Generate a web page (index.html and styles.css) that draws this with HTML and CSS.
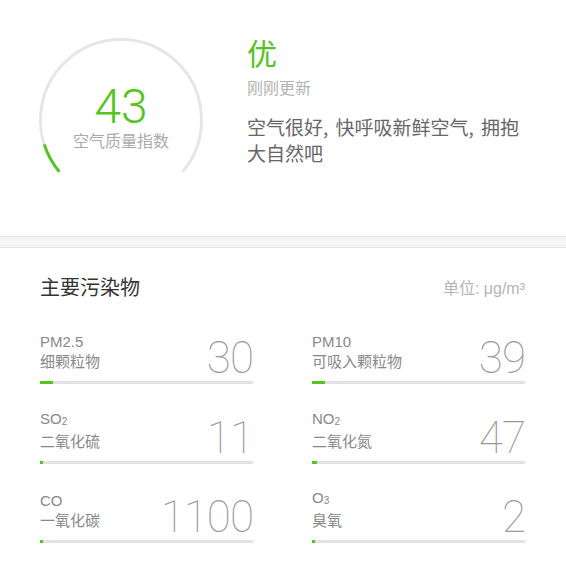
FILE: index.html
```html
<!DOCTYPE html>
<html lang="zh-CN">
<head>
<meta charset="utf-8">
<title>空气质量</title>
<link rel="stylesheet" href="styles.css">
</head>
<body>
<div class="page">
  <section class="hero">
    <div class="gauge">
      <svg class="gauge-ring" width="170" height="170" viewBox="0 0 170 170">
        <path d="M 23.34 136.74 A 80.5 80.5 0 1 1 146.66 136.74" fill="none" stroke="#e6e6e6" stroke-width="3"/>
        <path d="M 23.34 136.74 A 80.5 80.5 0 0 1 8.27 109.34" fill="none" stroke="#55c320" stroke-width="3"/>
      </svg>
      <div class="aqi">43</div>
      <div class="aqi-label">空气质量指数</div>
    </div>
    <div class="info">
      <div class="grade">优</div>
      <div class="updated">刚刚更新</div>
      <p class="desc">空气很好, 快呼吸新鲜空气, 拥抱大自然吧</p>
    </div>
  </section>
  <div class="divider"></div>
  <section class="pollutants">
    <header class="section-head">
      <h2 class="section-title">主要污染物</h2>
      <span class="unit">单位: μg/m³</span>
    </header>
    <div class="grid">
      <div class="item">
        <div class="item-top">
          <div class="names"><div class="code">PM2.5</div><div class="cn">细颗粒物</div></div>
          <div class="value">30</div>
        </div>
        <div class="bar"><div class="fill" style="width:13px"></div></div>
      </div>
      <div class="item">
        <div class="item-top">
          <div class="names"><div class="code">PM10</div><div class="cn">可吸入颗粒物</div></div>
          <div class="value">39</div>
        </div>
        <div class="bar"><div class="fill" style="width:13px"></div></div>
      </div>
      <div class="item">
        <div class="item-top">
          <div class="names"><div class="code">SO<span class="sub">2</span></div><div class="cn">二氧化硫</div></div>
          <div class="value">11</div>
        </div>
        <div class="bar"><div class="fill" style="width:3px"></div></div>
      </div>
      <div class="item">
        <div class="item-top">
          <div class="names"><div class="code">NO<span class="sub">2</span></div><div class="cn">二氧化氮</div></div>
          <div class="value">47</div>
        </div>
        <div class="bar"><div class="fill" style="width:5px"></div></div>
      </div>
      <div class="item">
        <div class="item-top">
          <div class="names"><div class="code">CO</div><div class="cn">一氧化碳</div></div>
          <div class="value">1100</div>
        </div>
        <div class="bar"><div class="fill" style="width:3px"></div></div>
      </div>
      <div class="item">
        <div class="item-top">
          <div class="names"><div class="code">O<span class="sub">3</span></div><div class="cn">臭氧</div></div>
          <div class="value">2</div>
        </div>
        <div class="bar"><div class="fill" style="width:3px"></div></div>
      </div>
    </div>
  </section>
</div>
</body>
</html>
```
FILE: styles.css
```css
* { box-sizing: border-box; }
html, body { margin: 0; padding: 0; background: #fff; }
body {
  font-family: "Liberation Sans", "Noto Sans CJK SC", sans-serif;
  color: #333;
}
.page { width: 566px; }

.hero {
  display: flex;
  height: 236px;
}
.gauge {
  position: relative;
  width: 170px;
  height: 170px;
  margin: 35px 0 0 36px;
  display: flex;
  flex-direction: column;
  align-items: center;
  padding-top: 53px;
}
.gauge-ring {
  position: absolute;
  left: 0;
  top: 0;
}
.aqi {
  position: relative;
  font-family: Roboto, "Liberation Sans", sans-serif;
  font-weight: 300;
  font-size: 48px;
  line-height: 38px;
  color: #55c320;
}
.aqi-label {
  position: relative;
  margin-top: 4px;
  font-family: "Noto Sans CJK SC", sans-serif;
  font-size: 16px;
  line-height: 20px;
  color: #aaaaaa;
}

.info {
  margin-left: 41px;
  padding-top: 34px;
  width: 282px;
}
.grade {
  font-family: "Noto Sans CJK SC", sans-serif;
  font-size: 30px;
  line-height: 36px;
  color: #55c320;
}
.updated {
  margin-top: 6px;
  font-family: "Noto Sans CJK SC", sans-serif;
  font-size: 16px;
  line-height: 22px;
  color: #b3b3b3;
}
.desc {
  margin: 16px 0 0;
  font-family: "Noto Sans CJK SC", sans-serif;
  font-size: 19px;
  line-height: 26px;
  word-spacing: 3px;
  color: #666;
}

.divider {
  height: 12px;
  background: #f5f5f5;
  border-top: 1px solid #e2e2e2;
  border-bottom: 1px solid #e2e2e2;
}

.pollutants {
  padding: 26px 41px 0 40px;
}
.section-head {
  display: flex;
  justify-content: space-between;
  align-items: center;
  height: 26px;
}
.section-title {
  margin: 0;
  font-family: "Noto Sans CJK SC", sans-serif;
  font-weight: 400;
  font-size: 20px;
  line-height: 26px;
  color: #333;
}
.unit {
  font-size: 16px;
  color: #b5b5b5;
}

.grid {
  margin-top: 32px;
  display: grid;
  grid-template-columns: 1fr 1fr;
  column-gap: 59px;
  row-gap: 27.5px;
}
.item-top {
  display: flex;
  justify-content: space-between;
  align-items: flex-end;
  height: 49px;
}
.names {
  padding-bottom: 9px;
  color: #888;
}
.code {
  font-size: 15px;
  line-height: 20px;
}
.sub {
  font-size: 10px;
  vertical-align: -1px;
}
.cn {
  font-size: 15px;
  line-height: 20px;
}
.value {
  font-family: Roboto, "Liberation Sans", sans-serif;
  font-weight: 100;
  font-size: 44px;
  line-height: 46px;
  letter-spacing: -1px;
  color: #9a9a9a;
}
.bar {
  height: 3px;
  background: #e3e3e3;
}
.fill {
  height: 100%;
  background: #55c320;
}
```
